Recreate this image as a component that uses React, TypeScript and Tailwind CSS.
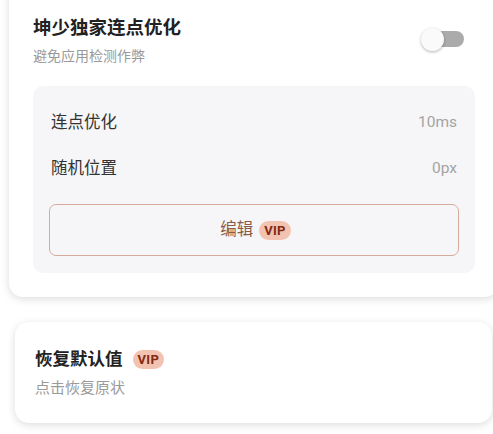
import React from "react";

const font = { fontFamily: "Roboto, 'Noto Sans CJK SC', sans-serif" };

function Vip() {
    return (
        <span className="inline-flex items-center justify-center h-[19px] px-[5px] rounded-full bg-[#f3c3b1] text-[#842a12] text-[13px] font-bold leading-none tracking-[0.3px]">
            VIP
        </span>
    );
}

function Toggle() {
    return (
        <div className="relative w-[43px] h-[24px] flex items-center">
            <div className="absolute right-0 left-[6px] h-[16px] rounded-full bg-[#ababab]" />
            <div className="absolute left-0 size-[23px] rounded-full bg-[#fafafa] shadow-[0_1px_3px_rgba(0,0,0,0.3)]" />
        </div>
    );
}

function Row({ label, value }: { label: string; value: string }) {
    return (
        <div className="flex items-center justify-between h-[46px] px-[2px]">
            <span className="text-[16.5px] text-[#333]">{label}</span>
            <span className="text-[15.5px] text-[#a3a3a3]">{value}</span>
        </div>
    );
}

export default function App() {
    return (
        <div className="w-[493px] h-[434px] overflow-hidden bg-white relative" style={font}>
            {/* Clicker card */}
            <div className="mt-[-20px] ml-[9px] w-[490px] bg-white rounded-[14px] shadow-[0_2px_8px_rgba(0,0,0,0.14)] px-[24px] pt-[35px] pb-[24px]">
                <div className="flex items-center justify-between">
                    <div className="flex flex-col">
                        <span className="text-[18.5px] leading-[26px] font-bold text-[#222]">坤少独家连点优化</span>
                        <span className="mt-[5px] text-[14px] leading-[20px] text-[#9a9a9a]">避免应用检测作弊</span>
                    </div>
                    <div className="mr-[11px] mt-[-3px]">
                        <Toggle />
                    </div>
                </div>

                <div className="mt-[20px] bg-[#f6f6f8] rounded-[10px] pt-[14px] pb-[17px] px-[16px]">
                    <Row label="连点优化" value="10ms" />
                    <Row label="随机位置" value="0px" />
                    <div className="mt-[12px] h-[52px] rounded-[7px] border border-[#d7ab9b] flex items-center justify-center gap-[6px] pl-[3px]">
                        <span className="text-[16.5px] text-[#8c5a48]">编辑</span>
                        <Vip />
                    </div>
                </div>
            </div>

            {/* Reset card */}
            <div className="mt-[25px] ml-[15px] w-[477px] bg-white rounded-[14px] shadow-[0_2px_8px_rgba(0,0,0,0.14)] px-[20px] pt-[24px] pb-[25px]">
                <div className="flex items-center gap-[10px]">
                    <span className="text-[17.5px] leading-[26px] font-bold text-[#222]">恢复默认值</span>
                    <Vip />
                </div>
                <div className="mt-[6px] text-[15px] leading-[20px] text-[#9a9a9a]">点击恢复原状</div>
            </div>
        </div>
    );
}
